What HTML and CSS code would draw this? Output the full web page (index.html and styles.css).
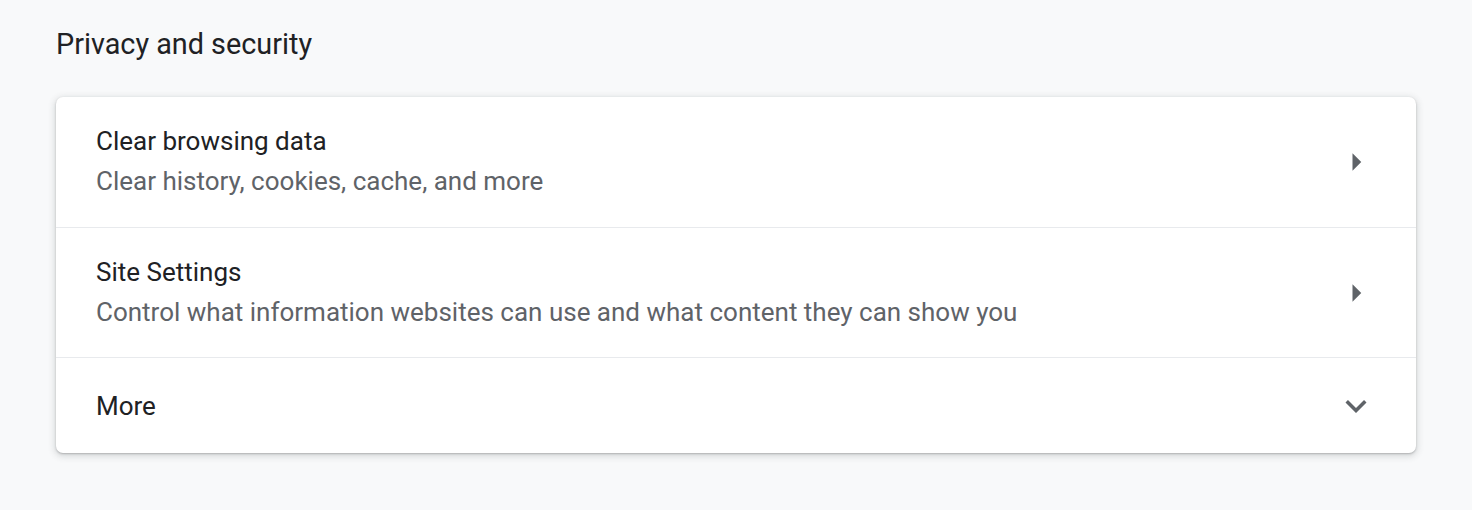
FILE: index.html
```html
<!DOCTYPE html>
<html>
<head>
<meta charset="utf-8">
<link rel="stylesheet" href="styles.css">
</head>
<body>
<main class="page">
  <h2 class="section-title">Privacy and security</h2>
  <div class="card">
    <div class="row row-two">
      <div class="texts">
        <div class="primary">Clear browsing data</div>
        <div class="secondary">Clear history, cookies, cache, and more</div>
      </div>
      <svg class="icon" viewBox="0 0 24 24"><path d="M10 17l5-5-5-5v10z"/></svg>
    </div>
    <div class="row row-two">
      <div class="texts">
        <div class="primary">Site Settings</div>
        <div class="secondary">Control what information websites can use and what content they can show you</div>
      </div>
      <svg class="icon" viewBox="0 0 24 24"><path d="M10 17l5-5-5-5v10z"/></svg>
    </div>
    <div class="row row-one">
      <div class="texts">
        <div class="primary">More</div>
      </div>
      <svg class="icon" viewBox="0 0 24 24"><path d="M16.59 8.59L12 13.17 7.41 8.59 6 10l6 6 6-6z"/></svg>
    </div>
  </div>
</main>
</body>
</html>
```

FILE: styles.css
```css
html, body {
  margin: 0;
  padding: 0;
  background: #f8f9fa;
  font-family: Roboto, "Liberation Sans", Arial, sans-serif;
}
.page {
  padding: 24px 56px;
}
.section-title {
  margin: 0;
  font-size: 28.8px;
  font-weight: 400;
  line-height: 40px;
  color: #202124;
}
.card {
  margin-top: 33px;
  background: #fff;
  border-radius: 7px;
  box-shadow: 0 1px 2px 0 rgba(60,64,67,.3), 0 2px 6px 2px rgba(60,64,67,.15);
}
.row {
  box-sizing: border-box;
  display: flex;
  align-items: center;
  padding: 0 39px 0 40px;
  border-top: 1px solid #e8eaed;
}
.row:first-child { border-top: none; }
.row-two { height: 130px; }
.row-one { height: 96px; }
.texts { flex: 1; }
.row-two .texts { padding-bottom: 2px; }
.primary {
  font-size: 26px;
  line-height: 40px;
  color: #202124;
}
.secondary {
  font-size: 26px;
  line-height: 40px;
  color: #5f6368;
}
.icon {
  width: 42px;
  height: 42px;
  fill: #5f6368;
}
```
